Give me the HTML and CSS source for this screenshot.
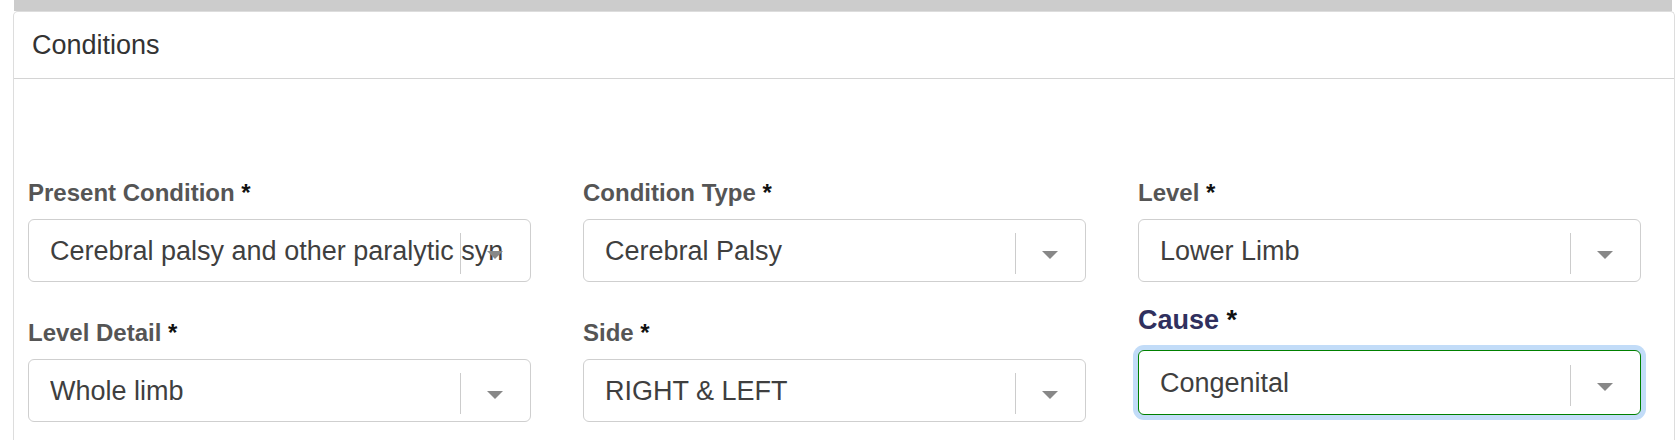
FILE: index.html
```html
<!DOCTYPE html>
<html lang="en">
<head>
<meta charset="utf-8">
<title>Conditions</title>
<link rel="stylesheet" href="styles.css">
</head>
<body>
<div class="topbar"></div>
<section class="card">
  <header class="card-header">Conditions</header>
  <div class="card-body">
    <div class="form-row">
      <div class="field">
        <label class="field-label">Present Condition <span class="req">*</span></label>
        <div class="select">
          <span class="select-value">Cerebral palsy and other paralytic syn</span>
          <span class="indicator"><span class="sep"></span><span class="arrow"></span></span>
        </div>
      </div>
      <div class="field">
        <label class="field-label">Condition Type <span class="req">*</span></label>
        <div class="select">
          <span class="select-value">Cerebral Palsy</span>
          <span class="indicator"><span class="sep"></span><span class="arrow"></span></span>
        </div>
      </div>
      <div class="field">
        <label class="field-label">Level <span class="req">*</span></label>
        <div class="select">
          <span class="select-value">Lower Limb</span>
          <span class="indicator"><span class="sep"></span><span class="arrow"></span></span>
        </div>
      </div>
    </div>
    <div class="form-row">
      <div class="field">
        <label class="field-label">Level Detail <span class="req">*</span></label>
        <div class="select">
          <span class="select-value">Whole limb</span>
          <span class="indicator"><span class="sep"></span><span class="arrow"></span></span>
        </div>
      </div>
      <div class="field">
        <label class="field-label">Side <span class="req">*</span></label>
        <div class="select">
          <span class="select-value">RIGHT &amp; LEFT</span>
          <span class="indicator"><span class="sep"></span><span class="arrow"></span></span>
        </div>
      </div>
      <div class="field field-focused">
        <label class="field-label">Cause <span class="req">*</span></label>
        <div class="select">
          <span class="select-value">Congenital</span>
          <span class="indicator"><span class="sep"></span><span class="arrow"></span></span>
        </div>
      </div>
    </div>
  </div>
</section>
</body>
</html>
```

FILE: styles.css
```css
* { box-sizing: border-box; }

body {
  margin: 0;
  background: #fff;
  font-family: "Liberation Sans", Arial, sans-serif;
}

.topbar {
  margin-left: 14px;
  width: 1658px;
  height: 11px;
  background: #cccccc;
}

.card {
  margin-left: 13px;
  width: 1662px;
  min-height: 429px;
  border: 1px solid #dddddd;
  border-bottom: none;
  border-radius: 5px 5px 0 0;
  background: #fff;
}

.card-header {
  padding: 18px 18px;
  font-size: 27px;
  line-height: 30px;
  color: #333333;
  border-bottom: 1px solid #d4d4d4;
}

.card-body {
  padding: 100px 0 0 14px;
}

.form-row {
  display: flex;
  gap: 52px;
  align-items: flex-end;
}

.form-row + .form-row {
  margin-top: 23px;
}

.field {
  width: 503px;
}

.field-label {
  display: block;
  font-weight: bold;
  font-size: 24px;
  line-height: 28px;
  color: #555555;
  margin-bottom: 12px;
}

.req {
  color: #111;
}

.select {
  position: relative;
  height: 63px;
  border: 1px solid #cfcfcf;
  border-radius: 6px;
  display: flex;
  align-items: center;
  padding: 0 21px;
  font-size: 27px;
  color: #3f3f3f;
  background: #fff;
}

.select-value {
  flex: 1;
  min-width: 0;
  white-space: nowrap;
  overflow: hidden;
  line-height: 30px;
}

.indicator {
  position: absolute;
  right: 0;
  top: 13px;
  width: 70px;
  height: 41px;
  display: flex;
  align-items: center;
}

.sep {
  width: 1px;
  height: 41px;
  background: #cccccc;
}

.arrow {
  margin-left: 26px;
  width: 0;
  height: 0;
  border-style: solid;
  border-width: 8px 8px 0 8px;
  border-color: #888888 transparent transparent transparent;
  margin-top: 2px;
}

.field-focused {
  margin-bottom: 7px;
}

.field-focused .field-label {
  font-size: 27px;
  line-height: 31px;
  color: #30305e;
  margin-bottom: 14px;
}

.field-focused .select {
  height: 65px;
  border-color: #008000;
  box-shadow: 0 0 0 5px #c2dcf8;
}

.field-focused .indicator {
  top: 14px;
}
```
